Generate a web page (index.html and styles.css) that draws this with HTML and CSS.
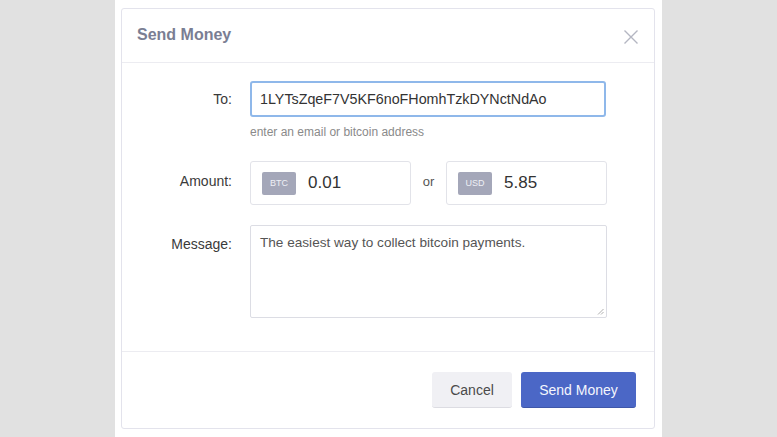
FILE: index.html
```html
<!DOCTYPE html>
<html>
<head>
<meta charset="utf-8">
<link rel="stylesheet" href="styles.css">
</head>
<body>
<div class="page">
  <div class="card">
    <div class="card-header">
      <div class="title">Send Money</div>
      <svg class="close" width="16" height="16" viewBox="0 0 16 16"><path d="M1.5 1.5 L14.5 14.5 M14.5 1.5 L1.5 14.5" stroke="#b4b6c2" stroke-width="1.4" fill="none"/></svg>
    </div>
    <div class="card-body">
      <div class="row row-to">
        <div class="label">To:</div>
        <div class="field">
          <div class="input focus">1LYTsZqeF7V5KF6noFHomhTzkDYNctNdAo</div>
          <div class="hint">enter an email or bitcoin address</div>
        </div>
      </div>
      <div class="row row-amount">
        <div class="label">Amount:</div>
        <div class="amounts">
          <div class="amount-box"><span class="badge">BTC</span><span class="amount">0.01</span></div>
          <div class="or">or</div>
          <div class="amount-box"><span class="badge">USD</span><span class="amount">5.85</span></div>
        </div>
      </div>
      <div class="row row-msg">
        <div class="label label-top">Message:</div>
        <div class="textarea">The easiest way to collect bitcoin payments.
          <svg class="grip" width="7" height="7" viewBox="0 0 7 7"><path d="M6.5 1 L1 6.5 M6.5 4 L4 6.5" stroke="#9a9a9a" stroke-width="0.8"/></svg>
        </div>
      </div>
    </div>
    <div class="card-footer">
      <div class="btn btn-cancel">Cancel</div>
      <div class="btn btn-primary">Send Money</div>
    </div>
  </div>
</div>
</body>
</html>
```
FILE: styles.css
```css
html, body {
  margin: 0;
  padding: 0;
}
body {
  background: #e1e1e1;
  font-family: "Liberation Sans", Arial, sans-serif;
  width: 777px;
  height: 437px;
  overflow: hidden;
}
.page {
  margin-left: 115px;
  width: 547px;
  height: 437px;
  background: #ffffff;
  padding-top: 8px;
  box-sizing: border-box;
}
.card {
  margin-left: 6px;
  width: 534px;
  height: 421px;
  box-sizing: border-box;
  border: 1px solid #e3e3ec;
  border-radius: 3px;
  display: flex;
  flex-direction: column;
}
.card-header {
  height: 54px;
  box-sizing: border-box;
  border-bottom: 1px solid #ececf1;
  display: flex;
  align-items: center;
  justify-content: space-between;
  padding: 0 15px 2px 15px;
}
.title {
  font-size: 16px;
  font-weight: bold;
  color: #7a7e93;
}
.close {
  margin-top: 4px;
}
.card-body {
  padding-top: 18px;
  flex: 1;
  box-sizing: border-box;
  border-bottom: 1px solid #ececf1;
}
.row {
  display: flex;
  gap: 18px;
}
.label {
  width: 110px;
  text-align: right;
  font-size: 14px;
  color: #3a3a3a;
  display: flex;
  align-items: center;
  justify-content: flex-end;
}
.row-to .label {
  height: 36px;
}
.row-amount .label {
  height: 44px;
  padding-bottom: 4px;
  box-sizing: border-box;
}
.label-top {
  align-items: flex-start;
  padding-top: 11px;
}
.input {
  width: 356px;
  height: 36px;
  box-sizing: border-box;
  border: 1px solid #d9dbe3;
  border-radius: 3px;
  font-size: 14.3px;
  color: #333;
  display: flex;
  align-items: center;
  padding-left: 9px;
}
.input.focus {
  border: 2px solid #8fb8ea;
  padding-left: 8px;
}
.hint {
  font-size: 12px;
  color: #8a8a8a;
  margin-top: 8px;
}
.row-amount {
  margin-top: 22px;
}
.amounts {
  display: flex;
  align-items: center;
}
.amount-box {
  width: 161px;
  height: 44px;
  box-sizing: border-box;
  border: 1px solid #e2e3e9;
  border-radius: 3px;
  display: flex;
  align-items: center;
  padding-left: 11px;
}
.badge {
  width: 34px;
  height: 23px;
  background: #a4a7b9;
  color: #eef0f6;
  font-size: 9px;
  display: flex;
  align-items: center;
  justify-content: center;
  border-radius: 2px;
}
.amount {
  margin-left: 12px;
  font-size: 17px;
  color: #333;
}
.or {
  width: 35px;
  text-align: center;
  font-size: 13px;
  color: #555;
  padding-bottom: 4px;
}
.row-msg {
  margin-top: 20px;
}
.textarea {
  position: relative;
  width: 357px;
  height: 93px;
  box-sizing: border-box;
  border: 1px solid #dcdde4;
  border-radius: 2px;
  padding: 9px 9px;
  font-size: 13.6px;
  color: #555;
}
.grip {
  position: absolute;
  right: 2px;
  bottom: 2px;
}
.card-footer {
  height: 76px;
  box-sizing: border-box;
  display: flex;
  justify-content: flex-end;
  gap: 9px;
  padding: 20px 18px 0 0;
}
.btn {
  height: 36px;
  box-sizing: border-box;
  border-radius: 3px;
  font-size: 14px;
  display: flex;
  align-items: center;
  justify-content: center;
}
.btn-cancel {
  width: 80px;
  background: #f0f0f4;
  color: #4a4a4a;
  border-bottom: 1px solid #dcdce2;
}
.btn-primary {
  width: 115px;
  background: #4b67c6;
  color: #f4f6fd;
  border-bottom: 1px solid #3f57a9;
}
```
